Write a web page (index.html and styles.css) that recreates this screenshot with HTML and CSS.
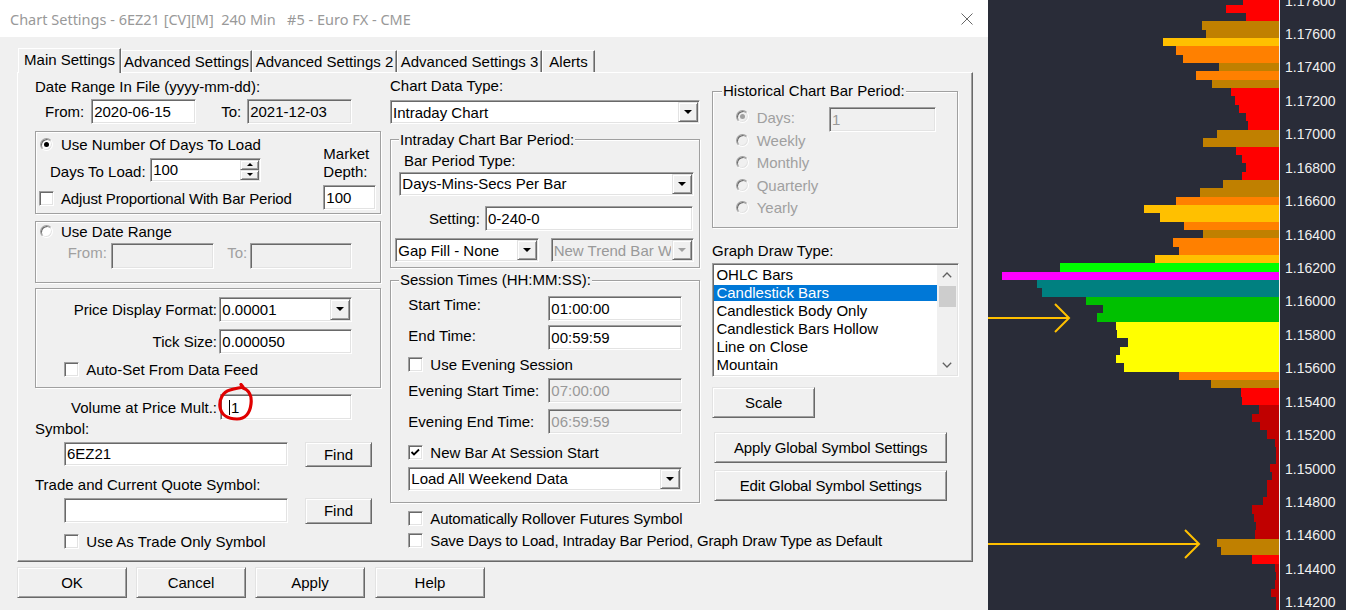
FILE: index.html
```html
<!DOCTYPE html>
<html>
<head>
<meta charset="utf-8">
<title>Chart Settings</title>
<link rel="stylesheet" href="styles.css">
</head>
<body>
<div class="screen">
  <div class="dialog">
    <div class="titlebar">
      <span class="title">Chart Settings - 6EZ21 [CV][M]  240 Min   #5 - Euro FX - CME</span>
      <svg class="close" width="12" height="12" viewBox="0 0 12 12"><path d="M0.5 0.5 L11.5 11.5 M11.5 0.5 L0.5 11.5" stroke="#666" stroke-width="1" fill="none"/></svg>
    </div>
    <div class="tabs">
      <div class="tab active t1">Main Settings</div>
      <div class="tab t2">Advanced Settings</div>
      <div class="tab t3">Advanced Settings 2</div>
      <div class="tab t4">Advanced Settings 3</div>
      <div class="tab t5">Alerts</div>
    </div>
    <div class="panel">
      <!-- LEFT COLUMN -->
      <div class="col col-l">
        <div class="t date-lbl">Date Range In File (yyyy-mm-dd):</div>
        <div class="row from-row">
          <span class="t">From:</span>
          <div class="edit from-ed">2020-06-15</div>
          <span class="t to-lbl">To:</span>
          <div class="edit ro to-ed">2021-12-03</div>
        </div>
        <div class="group grp1">
          <div class="g1-main">
            <div class="row opt days-opt"><span class="radio on"></span><span class="t">Use Number Of Days To Load</span></div>
            <div class="row days-row">
              <span class="t days-lbl">Days To Load:</span>
              <div class="edit days-ed"><span class="val">100</span>
                <div class="spin">
                  <div class="raised spin-btn"><span class="tri-s up"></span></div>
                  <div class="raised spin-btn"><span class="tri-s"></span></div>
                </div>
              </div>
            </div>
            <div class="row opt adj-opt"><span class="cb"></span><span class="t tight">Adjust Proportional With Bar Period</span></div>
          </div>
          <div class="g1-side">
            <div class="t md-lbl">Market<br>Depth:</div>
            <div class="edit md-ed">100</div>
          </div>
        </div>
        <div class="group grp2">
          <div class="row opt dr-opt"><span class="radio"></span><span class="t">Use Date Range</span></div>
          <div class="row dr-row">
            <span class="t dis-t dr-from">From:</span>
            <div class="edit dis dr-ed1"></div>
            <span class="t dis-t dr-to">To:</span>
            <div class="edit dis dr-ed2"></div>
          </div>
        </div>
        <div class="group grp3">
          <div class="row pf-row">
            <span class="t rlbl">Price Display Format:</span>
            <div class="combo pf-combo"><span class="val">0.00001</span><span class="raised arrow"><span class="tri"></span></span></div>
          </div>
          <div class="row ts-row">
            <span class="t rlbl">Tick Size:</span>
            <div class="edit ts-ed">0.000050</div>
          </div>
          <div class="row opt auto-opt"><span class="cb"></span><span class="t">Auto-Set From Data Feed</span></div>
        </div>
        <div class="row vol-row">
          <span class="t vlbl">Volume at Price Mult.:</span>
          <div class="edit vol-ed"><span class="caret"></span>1</div>
          <svg class="loop" width="40" height="42" viewBox="0 0 40 42"><path d="M26 5 C32 7, 35 13, 34 21 C33 30, 28 36, 20 36 C11 36, 4 32, 3 24 C2 16, 6 9, 13 7 C18 5.5, 22 5, 26 4 L24 1.5" stroke="#e00000" stroke-width="3.2" fill="none" stroke-linecap="round" stroke-linejoin="round"/></svg>
        </div>
        <div class="t sym-lbl">Symbol:</div>
        <div class="row sym-row">
          <div class="edit sym-ed">6EZ21</div>
          <div class="btn raised find">Find</div>
        </div>
        <div class="t tq-lbl">Trade and Current Quote Symbol:</div>
        <div class="row tq-row">
          <div class="edit sym-ed tq-ed"></div>
          <div class="btn raised find find2">Find</div>
        </div>
        <div class="row opt tos-opt"><span class="cb"></span><span class="t">Use As Trade Only Symbol</span></div>
      </div>

      <!-- MIDDLE COLUMN -->
      <div class="col col-m">
        <div class="t cdt-lbl">Chart Data Type:</div>
        <div class="combo cdt-combo"><span class="val">Intraday Chart</span><span class="raised arrow"><span class="tri"></span></span></div>
        <div class="group g-intra">
          <div class="t legend">Intraday Chart Bar Period:</div>
          <div class="t bpt-lbl">Bar Period Type:</div>
          <div class="combo bpt-combo"><span class="val">Days-Mins-Secs Per Bar</span><span class="raised arrow"><span class="tri"></span></span></div>
          <div class="row set-row"><span class="t">Setting:</span><div class="edit set-ed">0-240-0</div></div>
          <div class="row gap-row">
            <div class="combo gap-combo"><span class="val">Gap Fill - None</span><span class="raised arrow"><span class="tri"></span></span></div>
            <div class="combo dis ntb-combo"><span class="val">New Trend Bar W</span><span class="raised arrow"><span class="tri"></span></span></div>
          </div>
        </div>
        <div class="group g-sess">
          <div class="t legend leg-sess">Session Times (HH:MM:SS):</div>
          <div class="row tm-row st-row"><span class="t st-lbl">Start Time:</span><div class="edit tm-ed">01:00:00</div></div>
          <div class="row tm-row et-row"><span class="t et-lbl">End Time:</span><div class="edit tm-ed">00:59:59</div></div>
          <div class="row opt ev-opt"><span class="cb"></span><span class="t">Use Evening Session</span></div>
          <div class="row tm-row est-row"><span class="t">Evening Start Time:</span><div class="edit dis tm-ed">07:00:00</div></div>
          <div class="row tm-row eet-row"><span class="t">Evening End Time:</span><div class="edit dis tm-ed">06:59:59</div></div>
          <div class="row opt nb-opt"><span class="cb"><svg width="13" height="13" viewBox="0 0 13 13"><polyline points="2.5,6 5,8.5 10,3.5" stroke="#000" stroke-width="1.8" fill="none"/></svg></span><span class="t">New Bar At Session Start</span></div>
          <div class="combo wk-combo"><span class="val">Load All Weekend Data</span><span class="raised arrow"><span class="tri"></span></span></div>
        </div>
        <div class="row opt ar-opt"><span class="cb"></span><span class="t tight">Automatically Rollover Futures Symbol</span></div>
        <div class="row opt sd-opt"><span class="cb"></span><span class="t tight">Save Days to Load, Intraday Bar Period, Graph Draw Type as Default</span></div>
      </div>

      <!-- RIGHT COLUMN -->
      <div class="col col-r">
        <div class="group g-hist">
          <div class="t legend leg-hist">Historical Chart Bar Period:</div>
          <div class="row hd-row"><span class="radio dis on"></span><span class="t dis-t hd-lbl">Days:</span><div class="edit dis hd-ed">1</div></div>
          <div class="row opt hr hr-first"><span class="radio dis"></span><span class="t dis-t">Weekly</span></div>
          <div class="row opt hr"><span class="radio dis"></span><span class="t dis-t">Monthly</span></div>
          <div class="row opt hr"><span class="radio dis"></span><span class="t dis-t">Quarterly</span></div>
          <div class="row opt hr"><span class="radio dis"></span><span class="t dis-t">Yearly</span></div>
        </div>
        <div class="t gdt-lbl">Graph Draw Type:</div>
        <div class="listbox">
          <div class="items">
            <div class="item">OHLC Bars</div>
            <div class="item sel">Candlestick Bars</div>
            <div class="item">Candlestick Body Only</div>
            <div class="item">Candlestick Bars Hollow</div>
            <div class="item">Line on Close</div>
            <div class="item">Mountain</div>
          </div>
          <div class="sbar">
            <div class="sb-arrow"><svg width="10" height="6" viewBox="0 0 10 6"><polyline points="0.8,5.2 5,1 9.2,5.2" stroke="#606060" stroke-width="1.3" fill="none"/></svg></div>
            <div class="thumb"></div>
            <div class="sb-fill"></div>
            <div class="sb-arrow"><svg width="10" height="6" viewBox="0 0 10 6"><polyline points="0.8,0.8 5,5 9.2,0.8" stroke="#606060" stroke-width="1.3" fill="none"/></svg></div>
          </div>
        </div>
        <div class="btn raised scale">Scale</div>
        <div class="btn raised glob tight">Apply Global Symbol Settings</div>
        <div class="btn raised glob glob2 tight">Edit Global Symbol Settings</div>
      </div>
    </div>
    <div class="actions">
      <div class="btn raised act">OK</div>
      <div class="btn raised act">Cancel</div>
      <div class="btn raised act">Apply</div>
      <div class="btn raised act act-help">Help</div>
    </div>
  </div>

  <div class="chart">
    <div class="plot">
      <div class="bars">
        <div class="bar c-red" style="width:36px"></div>
        <div class="bar c-red" style="width:53px"></div>
        <div class="bar c-red" style="width:33px"></div>
        <div class="bar c-brn" style="width:77px"></div>
        <div class="bar c-brn" style="width:73px"></div>
        <div class="bar c-amb" style="width:116px"></div>
        <div class="bar c-org" style="width:103px"></div>
        <div class="bar c-org" style="width:96px"></div>
        <div class="bar c-brn" style="width:60px"></div>
        <div class="bar c-org" style="width:83px"></div>
        <div class="bar c-brn" style="width:67px"></div>
        <div class="bar c-red" style="width:48px"></div>
        <div class="bar c-red" style="width:44px"></div>
        <div class="bar c-red" style="width:40px"></div>
        <div class="bar c-red" style="width:33px"></div>
        <div class="bar c-red" style="width:31px"></div>
        <div class="bar c-brn" style="width:62px"></div>
        <div class="bar c-brn" style="width:76px"></div>
        <div class="bar c-red" style="width:43px"></div>
        <div class="bar c-red" style="width:37px"></div>
        <div class="bar c-red" style="width:33px"></div>
        <div class="bar c-red" style="width:37px"></div>
        <div class="bar c-brn" style="width:56px"></div>
        <div class="bar c-brn" style="width:79px"></div>
        <div class="bar c-org" style="width:103px"></div>
        <div class="bar c-amb" style="width:135px"></div>
        <div class="bar c-amb" style="width:119px"></div>
        <div class="bar c-org" style="width:95px"></div>
        <div class="bar c-brn" style="width:76px"></div>
        <div class="bar c-org" style="width:106px"></div>
        <div class="bar c-org" style="width:100px"></div>
        <div class="bar c-amb" style="width:124px"></div>
        <div class="bar c-lime" style="width:219px"></div>
        <div class="bar c-mag" style="width:277px"></div>
        <div class="bar c-teal" style="width:242px"></div>
        <div class="bar c-teal" style="width:237px"></div>
        <div class="bar c-grn" style="width:193px"></div>
        <div class="bar c-grn" style="width:176px"></div>
        <div class="bar c-grn" style="width:182px"></div>
        <div class="bar c-yel" style="width:163px"></div>
        <div class="bar c-yel" style="width:162px"></div>
        <div class="bar c-yel" style="width:151px"></div>
        <div class="bar c-yel" style="width:159px"></div>
        <div class="bar c-yel" style="width:163px"></div>
        <div class="bar c-yel" style="width:155px"></div>
        <div class="bar c-org" style="width:100px"></div>
        <div class="bar c-brn" style="width:68px"></div>
        <div class="bar c-red" style="width:38px"></div>
        <div class="bar c-red" style="width:37px"></div>
        <div class="bar c-drd" style="width:20px"></div>
        <div class="bar c-drd" style="width:27px"></div>
        <div class="bar c-drd" style="width:19px"></div>
        <div class="bar c-drd" style="width:12px"></div>
        <div class="bar c-drd" style="width:4px"></div>
        <div class="bar c-drd" style="width:3px"></div>
        <div class="bar c-drd" style="width:3px"></div>
        <div class="bar c-drd" style="width:9px"></div>
        <div class="bar c-drd" style="width:7px"></div>
        <div class="bar c-drd" style="width:12px"></div>
        <div class="bar c-drd" style="width:12px"></div>
        <div class="bar c-drd" style="width:16px"></div>
        <div class="bar c-drd" style="width:27px"></div>
        <div class="bar c-drd" style="width:25px"></div>
        <div class="bar c-drd" style="width:23px"></div>
        <div class="bar c-drd" style="width:24px"></div>
        <div class="bar c-brn" style="width:62px"></div>
        <div class="bar c-brn" style="width:58px"></div>
        <div class="bar c-red" style="width:27px"></div>
        <div class="bar c-drd" style="width:4px"></div>
        <div class="bar c-drd" style="width:3px"></div>
        <div class="bar c-drd" style="width:4px"></div>
        <div class="bar c-drd" style="width:8px"></div>
        <div class="bar c-drd" style="width:3px"></div>
        <div class="bar c-drd" style="width:3px"></div>
      </div>
      <svg class="arrows" width="291" height="610" viewBox="0 0 291 610">
        <g stroke="#ffc000" stroke-width="2" fill="none">
          <path d="M0 318 H81 M67 304 L81 318 L67 332"/>
          <path d="M0 544 H211 M197 530 L211 544 L197 558"/>
        </g>
      </svg>
    </div>
    <div class="axis">
      <div class="prices">
        <div class="price">1.17800</div>
        <div class="price">1.17600</div>
        <div class="price">1.17400</div>
        <div class="price">1.17200</div>
        <div class="price">1.17000</div>
        <div class="price">1.16800</div>
        <div class="price">1.16600</div>
        <div class="price">1.16400</div>
        <div class="price">1.16200</div>
        <div class="price">1.16000</div>
        <div class="price">1.15800</div>
        <div class="price">1.15600</div>
        <div class="price">1.15400</div>
        <div class="price">1.15200</div>
        <div class="price">1.15000</div>
        <div class="price">1.14800</div>
        <div class="price">1.14600</div>
        <div class="price">1.14400</div>
        <div class="price">1.14200</div>
      </div>
    </div>
  </div>
</div>
</body>
</html>
```

FILE: styles.css
```css
* { box-sizing: border-box; }
html, body { margin: 0; padding: 0; }
body {
  width: 1346px; height: 610px; overflow: hidden;
  font: 15px/17px "Liberation Sans", Arial, sans-serif;
  color: #000; background: #292c38;
}
.screen { display: flex; width: 1346px; height: 610px; }

/* ---------- dialog ---------- */
.dialog { width: 988px; flex: none; display: flex; flex-direction: column; background: #f0f0f0; }
.titlebar { height: 37px; flex: none; background: #fff; display: flex; align-items: center; padding: 1px 15px 0 10px; }
.title { flex: 1; font: 14.5px "Noto Sans", sans-serif; color: #999; white-space: pre; }
.close { display: block; }

.tabs { display: flex; align-items: flex-end; height: 25px; margin: 11px 0 -1px 18px; position: relative; z-index: 1; }
.tab {
  height: 22px; margin-bottom: 1px; padding-top: 2px; text-align: center; white-space: nowrap;
  background: #f0f0f0; border: 1px solid #fff; border-bottom: none; border-right-color: #696969;
  box-shadow: inset -1px 0 #a0a0a0;
}
.tab.active { height: 25px; margin-bottom: 0; padding-top: 1.6px; }
.t1 { width: 103px; } .t2 { width: 131px; } .t3 { width: 145px; } .t4 { width: 145px; } .t5 { width: 53px; }

.panel {
  margin-left: 17px; width: 956px; height: 490px; flex: none;
  border: 1px solid; border-color: #fff #696969 #696969 #fff;
  box-shadow: inset -1px -1px #a0a0a0;
  display: flex; padding-left: 17px;
}
.col { display: flex; flex-direction: column; flex: none; }
.col-l { width: 346px; }
.col-m { width: 310px; margin-left: 9px; }
.col-r { width: 247px; margin-left: 12px; }

.actions { display: flex; margin-top: 5px; padding-left: 17px; }
.act { width: 110px; height: 31px; margin-right: 9px; }
.act-help { margin-left: 1px; }

/* ---------- widgets ---------- */
.t { white-space: nowrap; }
.tight { letter-spacing: -0.15px; }
.dis-t { color: #a0a0a0; }
.row { display: flex; align-items: center; flex: none; }

.edit {
  height: 25px; flex: none; background: #fff; display: flex; align-items: center;
  padding-left: 2px; white-space: nowrap; overflow: hidden;
  border: 1px solid; border-color: #a0a0a0 #fff #fff #a0a0a0;
  box-shadow: inset 1px 1px #696969, inset -1px -1px #e3e3e3;
}
.edit.ro { background: #f0f0f0; }
.edit.dis { background: #f0f0f0; color: #999; }

.combo {
  height: 24px; flex: none; background: #fff; display: flex; align-items: center;
  padding-left: 2px; white-space: nowrap;
  border: 1px solid; border-color: #a0a0a0 #fff #fff #a0a0a0;
  box-shadow: inset 1px 1px #696969, inset -1px -1px #e3e3e3;
}
.combo .val { flex: 1; overflow: hidden; }
.combo.dis { background: #f0f0f0; color: #999; }
.combo .arrow { width: 20px; align-self: stretch; margin: 1px; display: flex; align-items: center; justify-content: center; flex: none; }
.tri { width: 0; height: 0; border-left: 4px solid transparent; border-right: 4px solid transparent; border-top: 4px solid #000; }
.combo.dis .tri { border-top-color: #a0a0a0; }

.raised {
  background: #f0f0f0;
  border: 1px solid; border-color: #e3e3e3 #696969 #696969 #e3e3e3;
  box-shadow: inset 1px 1px #fff, inset -1px -1px #a0a0a0;
}
.btn { display: flex; align-items: center; justify-content: center; flex: none; white-space: nowrap; }

.cb {
  width: 15px; height: 15px; flex: none; margin-right: 7px; background: #fff;
  border: 1px solid; border-color: #a0a0a0 #fff #fff #a0a0a0;
  box-shadow: inset 1px 1px #696969, inset -1px -1px #e3e3e3;
  display: flex; align-items: center; justify-content: center;
}
.cb svg { display: block; }

.radio {
  width: 13px; height: 13px; flex: none; margin-right: 8px; border-radius: 50%; background: #fff;
  border: 1px solid; border-color: #a0a0a0 #fff #fff #a0a0a0;
  box-shadow: inset 1px 1px #696969, inset -1px -1px #e3e3e3;
  display: flex; align-items: center; justify-content: center;
}
.radio.on::after { content: ""; width: 5px; height: 5px; border-radius: 50%; background: #000; }
.radio.dis { background: #f0f0f0; }
.radio.dis.on::after { background: #a0a0a0; }

.group {
  flex: none; display: flex; flex-direction: column;
  border: 1px solid #a0a0a0;
  box-shadow: inset 1px 1px #fff, 1px 1px #fff;
}
.legend { align-self: flex-start; background: #f0f0f0; padding: 0 1px; margin: -9px 0 0 8px; }

/* ---------- left column ---------- */
.date-lbl { margin-top: 5px; }
.from-row { margin-top: 4px; height: 25px; padding-left: 10px; }
.from-ed { margin-left: 7px; width: 105px; }
.to-lbl { margin-left: 25px; }
.to-ed { margin-left: 6px; width: 105px; }

.grp1 { margin-top: 7px; height: 83px; flex-direction: row; align-items: flex-start; }
.g1-main { display: flex; flex-direction: column; }
.days-opt { margin-top: 4.3px; margin-left: 4px; }
.days-row { margin-top: 4.7px; margin-left: 14px; height: 24px; }
.days-lbl { margin-top: 3px; }
.days-ed { margin-left: 4.5px; width: 111px; height: 24px; padding-right: 0; }
.days-ed .val { flex: 1; }
.spin { width: 19px; align-self: stretch; margin: 1px 1px 1px 0; display: flex; flex-direction: column; }
.spin-btn { flex: 1; display: flex; align-items: center; justify-content: center; }
.tri-s { width: 0; height: 0; border-left: 3px solid transparent; border-right: 3px solid transparent; border-top: 3px solid #000; }
.tri-s.up { border-top: none; border-bottom: 3px solid #000; }
.adj-opt { margin-top: 7.6px; margin-left: 3px; }
.g1-side { margin-left: auto; margin-right: 4.3px; margin-top: 12.5px; width: 52.4px; display: flex; flex-direction: column; }
.md-lbl { line-height: 18px; }
.md-ed { margin-top: 4.5px; height: 25px; }

.grp2 { margin-top: 7px; height: 62px; }
.dr-opt { margin-top: 1px; margin-left: 4px; }
.dr-row { margin-top: 3.3px; align-items: flex-start; }
.dr-from { margin-left: 31.7px; margin-top: 0.7px; }
.dr-ed1 { margin-left: 4.4px; width: 102.4px; height: 26px; }
.dr-to { margin-left: 13.6px; margin-top: 0.7px; }
.dr-ed2 { margin-left: 2.7px; width: 102.3px; height: 26px; }

.grp3 { margin-top: 5px; height: 100px; }
.rlbl { width: 181px; text-align: right; }
.pf-row { margin-top: 7.7px; }
.pf-combo { margin-left: 2.3px; width: 133px; height: 25px; }
.ts-row { margin-top: 7.3px; }
.ts-ed { margin-left: 2.3px; width: 133px; }
.auto-opt { margin-top: 7.3px; margin-left: 28.3px; }

.vol-row { margin-top: 6.3px; position: relative; }
.vlbl { width: 182px; text-align: right; }
.vol-ed { margin-left: 3px; width: 132.3px; height: 26px; padding-left: 8px; }
.caret { width: 1px; height: 15px; background: #000; margin-right: 1px; }
.loop { position: absolute; left: 182px; top: -11.3px; }

.sym-lbl { margin-top: 0; }
.sym-row { margin-top: 4.7px; margin-left: 29px; align-items: flex-start; }
.sym-ed { width: 224px; height: 24px; }
.find { margin-left: 17px; width: 67px; height: 25px; }
.tq-lbl { margin-top: 9.3px; }
.tq-row { margin-top: 4.4px; margin-left: 29px; }
.tq-ed { height: 25px; }
.find2 { height: 26px; }
.tos-opt { margin-top: 9px; margin-left: 29.3px; }

/* ---------- middle column ---------- */
.cdt-lbl { margin-top: 4px; }
.cdt-combo { margin-top: 6px; width: 310px; }
.g-intra { margin-top: 15.3px; height: 129px; width: 310px; }
.bpt-lbl { margin-top: 3.7px; margin-left: 13px; }
.bpt-combo { margin-top: 2.7px; margin-left: 8.3px; width: 295px; }
.set-row { margin-top: 10px; margin-left: 38px; }
.set-ed { margin-left: 5.1px; width: 208.3px; }
.gap-row { margin-top: 7.6px; }
.gap-combo { margin-left: 4.3px; width: 143.7px; }
.ntb-combo { margin-left: 11.7px; width: 143.6px; }

.g-sess { margin-top: 11.7px; height: 223px; width: 310px; }
.leg-sess { margin-top: -9.5px; }
.tm-row { margin-left: 17.3px; width: 273.4px; justify-content: space-between; height: 25px; }
.tm-ed { width: 133.4px; }
.st-row { margin-top: 7.2px; }
.st-lbl { margin-bottom: 8.2px; }
.et-row { margin-top: 4.3px; }
.et-lbl { margin-bottom: 4px; }
.ev-opt { margin-top: 6.3px; margin-left: 17.3px; }
.est-row { margin-top: 5px; }
.eet-row { margin-top: 6px; }
.nb-opt { margin-top: 9.7px; margin-left: 17.3px; }
.wk-combo { margin-top: 5.7px; margin-left: 17.3px; width: 273.4px; }
.ar-opt { margin-top: 6.6px; margin-left: 18.3px; }
.sd-opt { margin-top: 5.7px; margin-left: 18.3px; }

/* ---------- right column ---------- */
.g-hist { margin-top: 17.7px; height: 137.6px; width: 246.4px; }
.leg-hist { margin-top: -9.4px; margin-left: 9px; }
.hd-row { margin-top: 7.4px; margin-left: 22.7px; align-items: flex-start; height: 25px; }
.hd-row .radio { margin-top: 3.3px; }
.hd-lbl { margin-top: 2.3px; }
.hd-ed { margin-left: 34px; width: 106.7px; }
.hr { margin-left: 22.7px; margin-top: 5.6px; }
.hr-first { margin-top: 0; }
.gdt-lbl { margin-top: 13.7px; }

.listbox {
  margin-top: 4.3px; height: 113.4px; width: 246.7px; flex: none; background: #fff;
  border: 1px solid; border-color: #a0a0a0 #fff #fff #a0a0a0; padding: 1px;
  box-shadow: inset 1px 1px #696969, inset -1px -1px #e3e3e3;
  display: flex;
}
.items { flex: 1; padding-top: 2.2px; }
.item { height: 16px; line-height: 16px; padding-left: 2.4px; margin-bottom: 2px; white-space: nowrap; }
.item.sel { background: #0078d7; color: #fff; }
.sbar { width: 20px; flex: none; background: #f0f0f0; display: flex; flex-direction: column; }
.sb-arrow { height: 20px; flex: none; display: flex; align-items: center; justify-content: center; }
.sb-arrow svg { display: block; }
.thumb { height: 20.7px; flex: none; margin: 0.7px 0.3px 0 2.3px; background: #cdcdcd; }
.sb-fill { flex: 1; }

.scale { margin-top: 10.6px; width: 103.4px; height: 31px; }
.glob { margin-top: 14px; margin-left: 2px; width: 233.4px; height: 31px; }
.glob2 { margin-top: 6.7px; }

/* ---------- chart ---------- */
.chart { flex: 1; display: flex; background: #292c38; overflow: hidden; }
.plot { width: 291px; flex: none; position: relative; }
.bars { display: flex; flex-direction: column; margin-top: -3.7px; }
.bar { height: 8.357px; flex: none; margin-left: auto; }
.c-red { background: #ff0000; }
.c-drd { background: #c00000; }
.c-brn { background: #c08000; }
.c-org { background: #ff8000; }
.c-amb { background: #ffc000; }
.c-yel { background: #ffff00; }
.c-lime { background: #00ff00; }
.c-grn { background: #00c000; }
.c-mag { background: #ff00ff; }
.c-teal { background: #008080; }
.arrows { position: absolute; left: 0; top: 0; }
.axis { flex: 1; border-left: 1px solid #f0f0f0; padding-left: 5px; }
.prices { margin-top: -15.4px; }
.price { height: 33.43px; font: 14px/33.43px "Liberation Sans", Arial, sans-serif; color: #f0f0f0; white-space: nowrap; }
```
